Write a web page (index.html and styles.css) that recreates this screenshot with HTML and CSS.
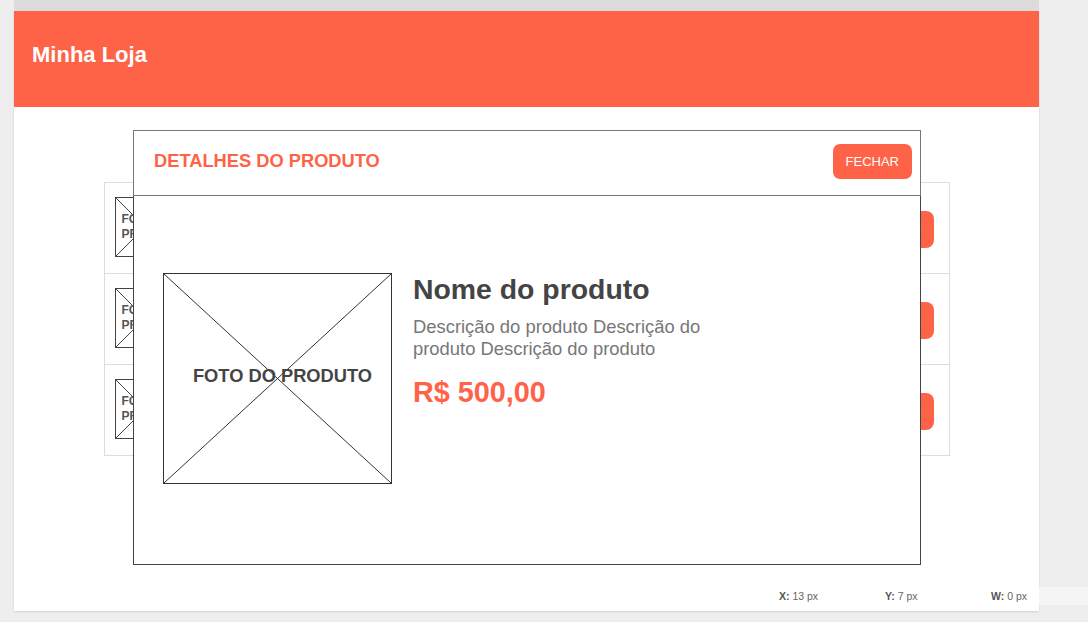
FILE: index.html
```html
<!DOCTYPE html>
<html lang="pt-BR">
<head>
<meta charset="utf-8">
<title>Minha Loja</title>
<link rel="stylesheet" href="styles.css">
</head>
<body>
<div class="workspace">
  <div class="topstrip"></div>
  <div class="page">
    <header class="header"><h1 class="brand">Minha Loja</h1></header>
    <main class="content">
      <div class="list">
        <div class="row">
          <div class="thumb">
            <svg class="cross" viewBox="0 0 100 100" preserveAspectRatio="none"><line x1="0" y1="0" x2="100" y2="100"/><line x1="100" y1="0" x2="0" y2="100"/></svg>
            <span class="thumb-text">FOTO DO<br>PRODUTO</span>
          </div>
          <button class="btn btn-row">DETALHES</button>
        </div>
        <div class="row">
          <div class="thumb">
            <svg class="cross" viewBox="0 0 100 100" preserveAspectRatio="none"><line x1="0" y1="0" x2="100" y2="100"/><line x1="100" y1="0" x2="0" y2="100"/></svg>
            <span class="thumb-text">FOTO DO<br>PRODUTO</span>
          </div>
          <button class="btn btn-row">DETALHES</button>
        </div>
        <div class="row">
          <div class="thumb">
            <svg class="cross" viewBox="0 0 100 100" preserveAspectRatio="none"><line x1="0" y1="0" x2="100" y2="100"/><line x1="100" y1="0" x2="0" y2="100"/></svg>
            <span class="thumb-text">FOTO DO<br>PRODUTO</span>
          </div>
          <button class="btn btn-row">DETALHES</button>
        </div>
      </div>
    </main>

    <div class="modal">
      <div class="modal-header">
        <h2 class="modal-title">DETALHES DO PRODUTO</h2>
        <button class="btn btn-close">FECHAR</button>
      </div>
      <div class="modal-body">
        <div class="photo">
          <svg class="cross" viewBox="0 0 100 100" preserveAspectRatio="none"><line x1="0" y1="0" x2="100" y2="100"/><line x1="100" y1="0" x2="0" y2="100"/></svg>
          <span class="photo-text">FOTO DO PRODUTO</span>
        </div>
        <div class="info">
          <h3 class="name">Nome do produto</h3>
          <p class="desc">Descrição do produto Descrição do produto Descrição do produto</p>
          <p class="price">R$ 500,00</p>
        </div>
      </div>
    </div>

    <div class="status">
      <span class="stat"><b>X:</b> 13 px</span>
      <span class="stat"><b>Y:</b> 7 px</span>
      <span class="stat"><b>W:</b> 0 px</span>
    </div>
  </div>
  <div class="status-tail"></div>
</div>
</body>
</html>
```

FILE: styles.css
```css
* { box-sizing: border-box; }

html, body {
  margin: 0;
  padding: 0;
}

body {
  background: #eeeeee;
  font-family: "Liberation Sans", Arial, sans-serif;
  width: 1088px;
  height: 622px;
  overflow: hidden;
}

.workspace {
  position: relative;
  margin-left: 14px;
  width: 1025px;
}

.topstrip {
  height: 11px;
  background: #dcdcdc;
}

.page {
  position: relative;
  height: 600px;
  background: #ffffff;
  box-shadow: 0 1px 2px rgba(0, 0, 0, 0.12);
}

.header {
  height: 96px;
  background: #ff6347;
  display: flex;
  align-items: center;
  padding: 0 18px 8px;
}

.brand {
  margin: 0;
  color: #ffffff;
  font-size: 22px;
  font-weight: bold;
}

.content {
  padding-top: 75px;
  display: flex;
  justify-content: center;
}

.list {
  width: 846px;
  border: 1px solid #dddddd;
}

.row {
  height: 91px;
  border-bottom: 1px solid #dddddd;
  display: flex;
  align-items: center;
  justify-content: space-between;
  padding: 0 15px 0 10px;
}

.row:last-child {
  height: 90px;
  border-bottom: none;
}

.thumb {
  position: relative;
  width: 60px;
  height: 60px;
  border: 1px solid #444444;
  display: flex;
  align-items: center;
  padding-left: 6px;
  margin-top: -3px;
}

.cross {
  position: absolute;
  left: 0;
  top: 0;
  width: 100%;
  height: 100%;
}

.cross line {
  stroke: #444444;
  stroke-width: 1;
  vector-effect: non-scaling-stroke;
}

.thumb-text {
  position: relative;
  font-size: 12px;
  font-weight: bold;
  color: #555555;
  line-height: 15px;
  white-space: nowrap;
}

.btn {
  border: none;
  background: #ff6347;
  color: #ffffff;
  font-family: "Liberation Sans", Arial, sans-serif;
  font-size: 13px;
  line-height: 15px;
  cursor: pointer;
}

.btn-row {
  padding: 11px 12px;
  border-radius: 8px;
  margin-top: 3px;
}

.modal {
  position: absolute;
  left: 119px;
  top: 119px;
  width: 788px;
  background: #ffffff;
}

.modal-header {
  height: 66px;
  border: 1px solid #777777;
  display: flex;
  align-items: center;
  justify-content: space-between;
  padding: 0 8px 4px 20px;
}

.modal-title {
  margin: 0;
  color: #ff6347;
  font-size: 18.3px;
  font-weight: bold;
}

.btn-close {
  padding: 10px 13px;
  border-radius: 7px;
}

.modal-body {
  height: 369px;
  border: 1px solid #444444;
  border-top: none;
  display: flex;
  align-items: flex-start;
  padding: 77px 20px 0 29px;
}

.photo {
  position: relative;
  flex: none;
  width: 229px;
  height: 211px;
  border: 1px solid #333333;
  display: flex;
  align-items: center;
  justify-content: center;
  padding-left: 10px;
}

.photo .cross line {
  stroke: #333333;
}

.photo-text {
  position: relative;
  font-size: 18.3px;
  font-weight: bold;
  color: #444444;
  margin-top: -6px;
}

.info {
  margin-left: 21px;
  width: 300px;
}

.name {
  margin: 0;
  font-size: 28.4px;
  font-weight: bold;
  color: #444444;
  line-height: 32px;
}

.desc {
  margin: 11px 0 0;
  font-size: 18.4px;
  line-height: 21.5px;
  color: #777777;
}

.price {
  margin: 17px 0 0;
  font-size: 28.8px;
  font-weight: bold;
  color: #ff6347;
  line-height: 32px;
}

.status {
  position: absolute;
  left: 765px;
  top: 576px;
  width: 260px;
  height: 18px;
  display: flex;
  align-items: center;
  font-size: 10.5px;
  color: #666666;
}

.stat {
  width: 106px;
  flex: none;
}

.stat:last-child {
  width: auto;
}

.stat b {
  font-weight: bold;
  color: #555555;
}

.status-tail {
  position: absolute;
  left: 1025px;
  top: 587px;
  width: 49px;
  height: 18px;
  background: #f5f5f5;
}
```
